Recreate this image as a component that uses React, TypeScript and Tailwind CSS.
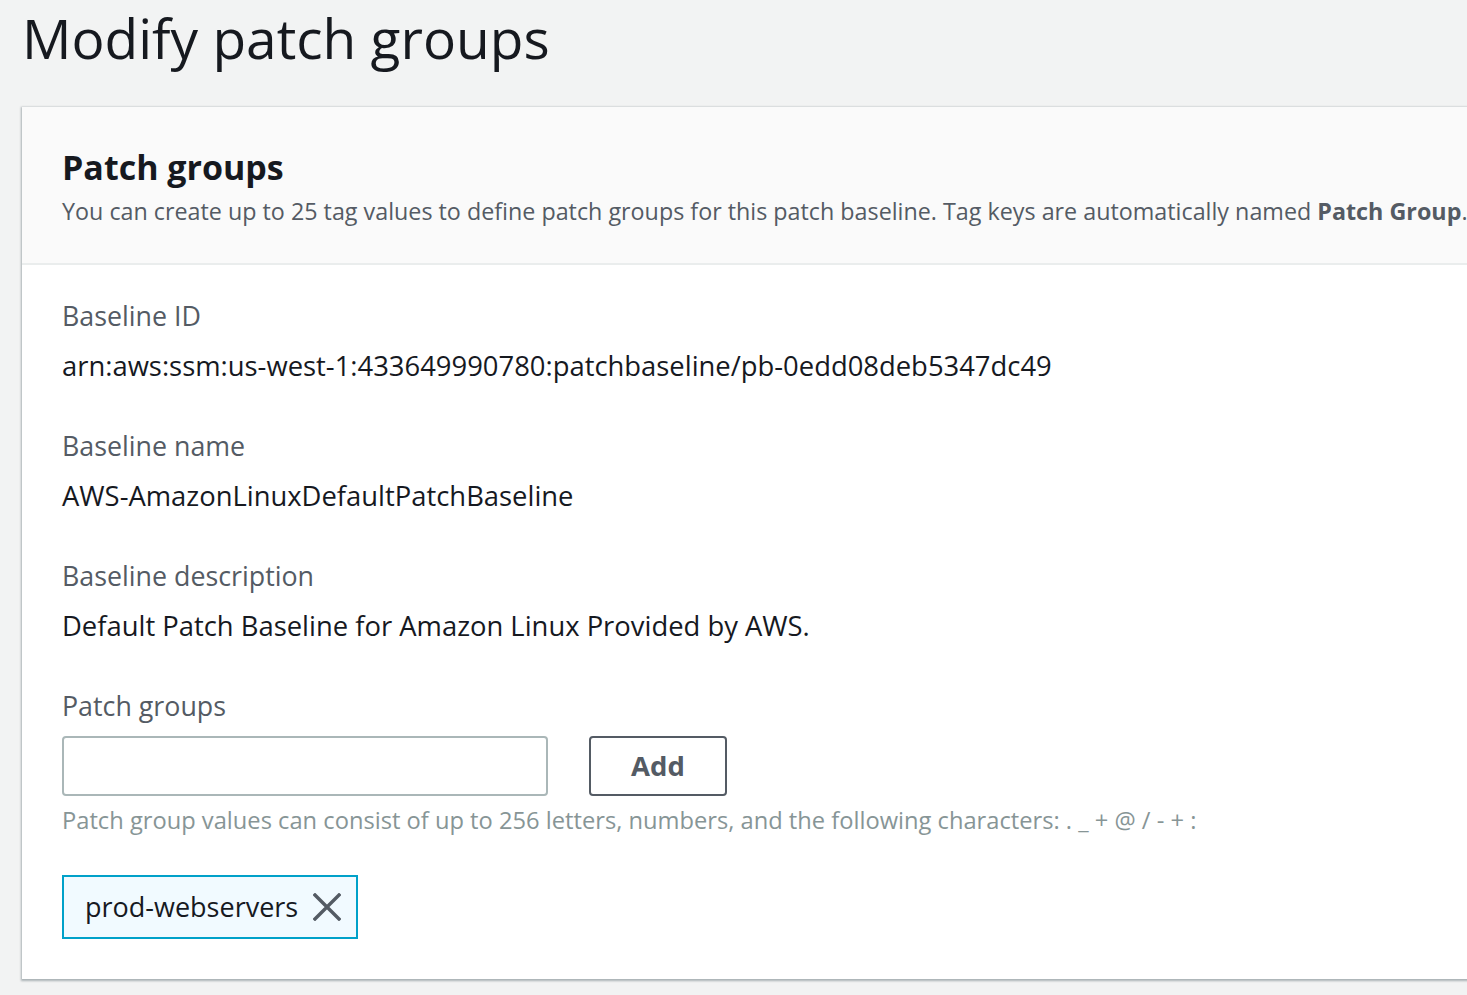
const fields = [
  { label: 'Baseline ID', value: 'arn:aws:ssm:us-west-1:433649990780:patchbaseline/pb-0edd08deb5347dc49' },
  { label: 'Baseline name', value: 'AWS-AmazonLinuxDefaultPatchBaseline' },
  { label: 'Baseline description', value: 'Default Patch Baseline for Amazon Linux Provided by AWS.' },
];

export default function App() {
  return (
    <div className="min-h-[995px] w-[1467px] overflow-hidden bg-[#f2f3f3] font-['Open_Sans',sans-serif] text-[#16191f]">
      <h1 className="pl-[22px] pt-[4px] text-[55px] leading-[68px] font-normal">Modify patch groups</h1>

      <div className="ml-[22px] mt-[35px] w-[1500px] bg-white shadow-[0_1px_2px_1px_rgba(0,28,36,0.3)]">
        <div className="border-b-2 border-[#eaeded] bg-[#fafafa] pl-[40px] pt-[38px] pb-[36px]">
          <h2 className="text-[34px] font-bold leading-[44px]">Patch groups</h2>
          <p className="mt-[6px] text-[23.3px] leading-[32px] text-[#545b64] whitespace-nowrap">
            You can create up to 25 tag values to define patch groups for this patch baseline. Tag keys are automatically named{' '}
            <span className="font-bold">Patch Group</span>.
          </p>
        </div>

        <div className="pl-[40px] pt-[34px] pb-[40px]">
          {fields.map((f) => (
            <div key={f.label} className="mb-[46px]">
              <div className="text-[26.8px] leading-[34px] text-[#545b64]">{f.label}</div>
              <div className="mt-[16px] text-[27.4px] leading-[34px]">{f.value}</div>
            </div>
          ))}

          <div className="text-[26.8px] leading-[34px] text-[#545b64]">Patch groups</div>
          <div className="mt-[13px] flex items-center gap-[41px]">
            <input className="h-[60px] w-[486px] rounded-[4px] border-2 border-[#aab7b8] bg-white px-3 outline-none" />
            <button className="h-[60px] w-[138px] rounded-[4px] border-2 border-[#545b64] bg-white text-[27.5px] font-bold text-[#545b64]">
              Add
            </button>
          </div>
          <div className="mt-[8px] text-[23.7px] leading-[32px] text-[#879596]">
            Patch group values can consist of up to 256 letters, numbers, and the following characters: . _ + @ / - + :
          </div>

          <div className="mt-[39px] inline-flex h-[64px] items-center gap-[15px] border-2 border-[#00a1c9] bg-[#f1faff] pl-[21px] pr-[15px]">
            <span className="text-[27px] leading-[34px]">prod-webservers</span>
            <svg width="28" height="28" viewBox="0 0 28 28" className="text-[#545b64]">
              <path d="M2 2L26 26M26 2L2 26" stroke="currentColor" strokeWidth="3.4" strokeLinecap="square" fill="none" />
            </svg>
          </div>
        </div>
      </div>
    </div>
  );
}
